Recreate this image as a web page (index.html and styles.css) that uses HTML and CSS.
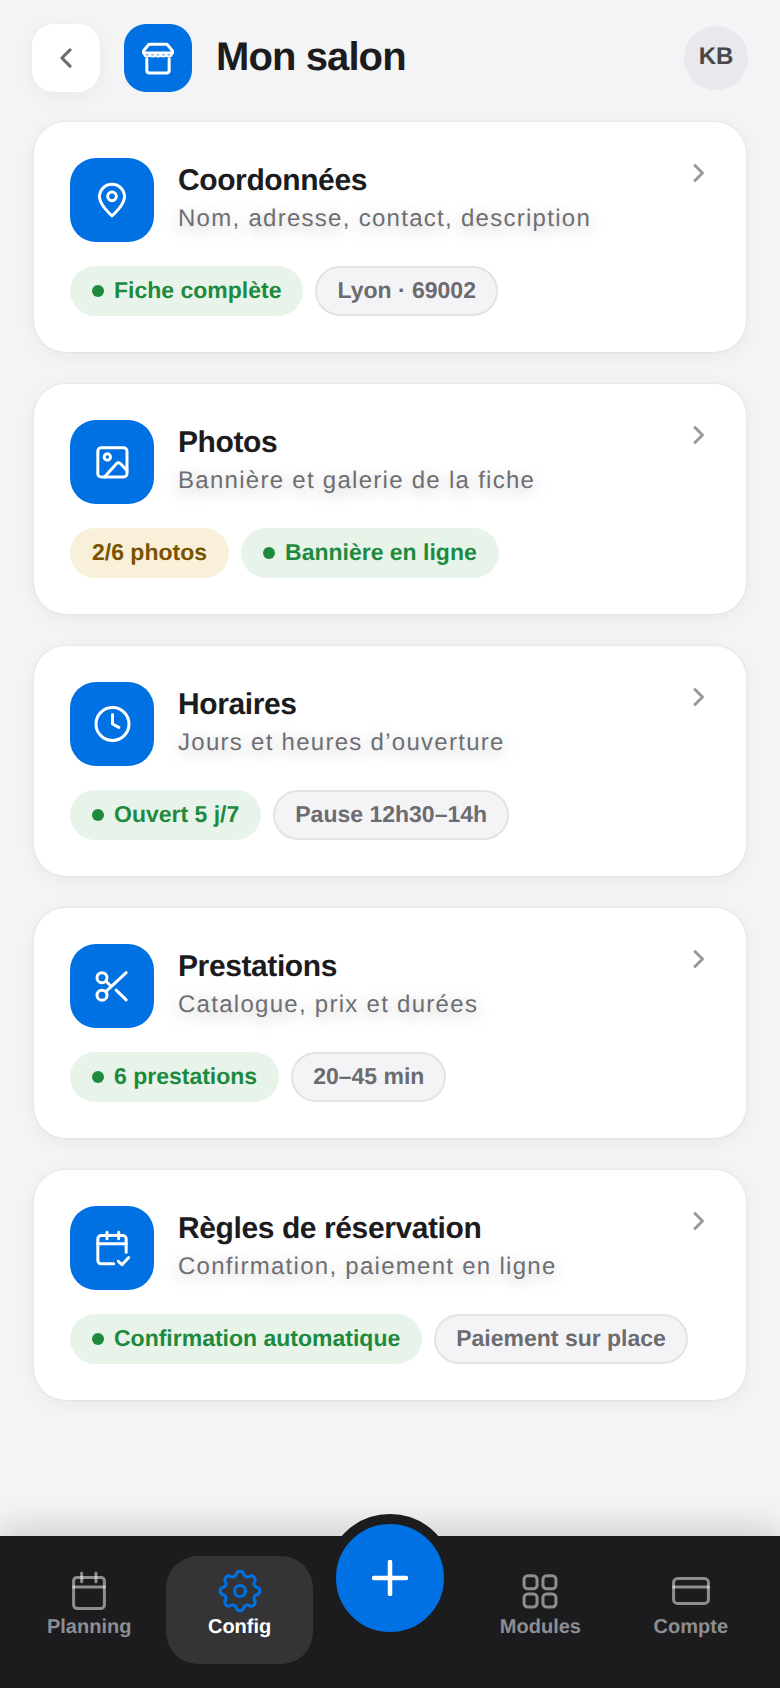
FILE: index.html
```html
<!DOCTYPE html>
<html lang="fr">
<head>
<meta charset="utf-8">
<title>Mon salon</title>
<link rel="stylesheet" href="styles.css">
</head>
<body>
<div class="app">
  <header class="topbar">
    <button class="back" aria-label="Retour">
      <svg class="back-icon" viewBox="0 0 24 24"><path d="M15.500 5l-7 7 7 7"/></svg>
    </button>
    <div class="tile tile-sm">
      <svg class="ic" viewBox="0 0 24 24"><path d="M7 3.800h10a1 1 0 0 1 .8.4l2.700 3.300a1 1 0 0 1 .2.6V9H3.300v-.9a1 1 0 0 1 .2-.6L6.200 4.200a1 1 0 0 1 .8-.4z"/><path class="scallop" d="M3.800 9.600c0 2 3.300 2 3.300 0 0 2 3.300 2 3.300 0 0 2 3.200 2 3.200 0 0 2 3.300 2 3.300 0 0 2 3.300 2 3.300 0"/><path d="M5.300 12.500V19.500a1.500 1.500 0 0 0 1.500 1.500h10.400a1.500 1.500 0 0 0 1.500-1.500v-7"/></svg>
    </div>
    <h1 class="page-title">Mon salon</h1>
    <div class="avatar"><span>KB</span></div>
  </header>

  <main class="list">
    <article class="card">
      <div class="card-head">
        <div class="tile">
          <svg class="ic" viewBox="0 0 24 24"><path d="M19.500 10c0 5-7.500 11.500-7.500 11.500S4.500 15 4.500 10a7.500 7.500 0 0 1 15 0z"/><circle cx="12" cy="9.800" r="2.600"/></svg>
        </div>
        <div class="card-text">
          <h2 class="card-title">Coordonnées</h2>
          <p class="card-sub">Nom, adresse, contact, description</p>
        </div>
        <svg class="chev" viewBox="0 0 24 24"><path d="M8 4.500l7.500 7.500L8 19.500"/></svg>
      </div>
      <div class="pills">
        <span class="pill pill-green"><i class="dot"></i>Fiche complète</span>
        <span class="pill pill-grey">Lyon · 69002</span>
      </div>
    </article>

    <article class="card">
      <div class="card-head">
        <div class="tile">
          <svg class="ic" viewBox="0 0 24 24"><rect x="3.500" y="3.500" width="17.500" height="17.500" rx="2"/><circle cx="9.200" cy="9" r="1.900"/><path d="M7.500 21l7.300-8.100a1.500 1.500 0 0 1 2.200 0l4 4.100"/></svg>
        </div>
        <div class="card-text">
          <h2 class="card-title">Photos</h2>
          <p class="card-sub">Bannière et galerie de la fiche</p>
        </div>
        <svg class="chev" viewBox="0 0 24 24"><path d="M8 4.500l7.500 7.500L8 19.500"/></svg>
      </div>
      <div class="pills">
        <span class="pill pill-amber">2/6 photos</span>
        <span class="pill pill-green"><i class="dot"></i>Bannière en ligne</span>
      </div>
    </article>

    <article class="card">
      <div class="card-head">
        <div class="tile">
          <svg class="ic" viewBox="0 0 24 24"><circle cx="12.300" cy="12" r="9.900"/><path d="M12.300 6.300V12l3.800 2"/></svg>
        </div>
        <div class="card-text">
          <h2 class="card-title">Horaires</h2>
          <p class="card-sub">Jours et heures d’ouverture</p>
        </div>
        <svg class="chev" viewBox="0 0 24 24"><path d="M8 4.500l7.500 7.500L8 19.500"/></svg>
      </div>
      <div class="pills">
        <span class="pill pill-green"><i class="dot"></i>Ouvert 5 j/7</span>
        <span class="pill pill-grey">Pause 12h30–14h</span>
      </div>
    </article>

    <article class="card">
      <div class="card-head">
        <div class="tile">
          <svg class="ic" viewBox="0 0 24 24"><circle cx="6" cy="7" r="3"/><circle cx="6" cy="17.500" r="3"/><path d="M8.300 15.400L20.500 4"/><path d="M8.300 9.100l3 2.900"/><path d="M14.500 14.500l6 5.800"/></svg>
        </div>
        <div class="card-text">
          <h2 class="card-title">Prestations</h2>
          <p class="card-sub">Catalogue, prix et durées</p>
        </div>
        <svg class="chev" viewBox="0 0 24 24"><path d="M8 4.500l7.500 7.500L8 19.500"/></svg>
      </div>
      <div class="pills">
        <span class="pill pill-green"><i class="dot"></i>6 prestations</span>
        <span class="pill pill-grey">20–45 min</span>
      </div>
    </article>

    <article class="card">
      <div class="card-head">
        <div class="tile">
          <svg class="ic" viewBox="0 0 24 24"><path d="M20.500 14.500V6.500a2 2 0 0 0-2-2h-13a2 2 0 0 0-2 2v13a2 2 0 0 0 2 2H13"/><path d="M9 2.500v4"/><path d="M16 2.500v4"/><path d="M3.500 9.500h17"/><path d="M15.800 20l2.200 2 4-4.300"/></svg>
        </div>
        <div class="card-text">
          <h2 class="card-title">Règles de réservation</h2>
          <p class="card-sub">Confirmation, paiement en ligne</p>
        </div>
        <svg class="chev" viewBox="0 0 24 24"><path d="M8 4.500l7.500 7.500L8 19.500"/></svg>
      </div>
      <div class="pills">
        <span class="pill pill-green"><i class="dot"></i>Confirmation automatique</span>
        <span class="pill pill-grey">Paiement sur place</span>
      </div>
    </article>
  </main>

  <nav class="tabbar">
    <a class="tab">
      <svg class="tab-ic" viewBox="0 0 24 24"><rect x="3.600" y="4.600" width="16.800" height="16.900" rx="1.800"/><path d="M3.600 9.800h16.800"/><path d="M8 2.200V7"/><path d="M15.800 2.200V7"/></svg>
      <span>Planning</span>
    </a>
    <a class="tab tab-active">
      <svg class="tab-ic gear" viewBox="2 2 20 20"><path d="M10.325 4.317c.426-1.756 2.924-1.756 3.350 0a1.724 1.724 0 0 0 2.573 1.066c1.543-.94 3.310.826 2.370 2.370a1.724 1.724 0 0 0 1.065 2.572c1.756.426 1.756 2.924 0 3.350a1.724 1.724 0 0 0-1.066 2.573c.94 1.543-.826 3.310-2.370 2.370a1.724 1.724 0 0 0-2.572 1.065c-.426 1.756-2.924 1.756-3.350 0a1.724 1.724 0 0 0-2.573-1.066c-1.543.94-3.310-.826-2.370-2.370a1.724 1.724 0 0 0-1.065-2.572c-1.756-.426-1.756-2.924 0-3.350a1.724 1.724 0 0 0 1.066-2.573c-.94-1.543.826-3.310 2.370-2.370 1 .608 2.296.07 2.572-1.065z"/><circle cx="12" cy="12" r="2.500"/></svg>
      <span>Config</span>
    </a>
    <div class="tab-gap"></div>
    <a class="tab">
      <svg class="tab-ic" viewBox="0 0 24 24"><rect x="3.300" y="3.700" width="7.100" height="7.100" rx="2"/><rect x="13.600" y="3.700" width="7.100" height="7.100" rx="2"/><rect x="3.300" y="13.600" width="7.100" height="7.100" rx="2"/><rect x="13.600" y="13.600" width="7.100" height="7.100" rx="2"/></svg>
      <span>Modules</span>
    </a>
    <a class="tab">
      <svg class="tab-ic" viewBox="0 0 24 24"><rect x="2.500" y="5.200" width="19" height="13.600" rx="2.200"/><path d="M2.500 9.800h19"/></svg>
      <span>Compte</span>
    </a>
    <button class="fab" aria-label="Ajouter">
      <svg class="fab-ic" viewBox="0 0 36 36"><path d="M18 2v32"/><path d="M2 18h32"/></svg>
    </button>
  </nav>
</div>
</body>
</html>
```
FILE: styles.css
```css
* { box-sizing: border-box; }
html, body { margin: 0; padding: 0; }
body {
  background: #f4f4f6;
  font-family: "Liberation Sans", Arial, sans-serif;
  color: #1c1c1e;
  text-rendering: geometricPrecision;
}
.app {
  width: 780px;
  height: 1688px;
  display: flex;
  flex-direction: column;
  overflow: hidden;
}

/* header */
.topbar {
  display: flex;
  align-items: center;
  gap: 24px;
  padding: 24px 32px 0;
}
.back {
  width: 68px;
  height: 68px;
  border: 0;
  border-radius: 22px;
  background: #fff;
  box-shadow: 0 4px 20px rgba(0, 0, 0, 0.05);
  display: flex;
  align-items: center;
  justify-content: center;
  padding: 0;
}
.back-icon {
  width: 28px;
  height: 28px;
  fill: none;
  stroke: #6b6b70;
  stroke-width: 2.700;
  stroke-linecap: round;
  stroke-linejoin: round;
}
.tile {
  width: 84px;
  height: 84px;
  flex: none;
  border-radius: 26px;
  background: #0071e3;
  display: flex;
  align-items: center;
  justify-content: center;
}
.tile-sm {
  width: 68px;
  height: 68px;
  border-radius: 22px;
}
.ic {
  width: 40px;
  height: 40px;
  fill: none;
  stroke: #fff;
  stroke-width: 1.800;
  stroke-linecap: round;
  stroke-linejoin: round;
}
.scallop {
  stroke-width: 1.300;
}
.page-title {
  flex: 1;
  margin: 0 0 2px;
  font-size: 40px;
  line-height: 48px;
  font-weight: 700;
  letter-spacing: -0.9px;
  color: #1c1c1e;
}
.avatar {
  width: 64px;
  height: 64px;
  border-radius: 50%;
  background: #e8e8ed;
  display: flex;
  align-items: center;
  justify-content: center;
  padding-bottom: 2px;
  font-size: 24px;
  font-weight: 700;
  color: #48484a;
}

/* cards */
.list {
  flex: 1;
  display: flex;
  flex-direction: column;
  gap: 32px;
  padding: 30px 34px 0;
}
.card {
  height: 230px;
  padding: 36px;
  background: #fff;
  border-radius: 32px;
  box-shadow: 0 4px 20px rgba(0, 0, 0, 0.05), 0 0 3px rgba(0, 0, 0, 0.08);
}
.card-head {
  display: flex;
  align-items: flex-start;
  gap: 24px;
}
.card-text {
  flex: 1;
  padding-top: 3px;
}
.card-title {
  margin: 0;
  font-size: 30px;
  line-height: 40px;
  font-weight: 700;
  letter-spacing: -0.4px;
  color: #1c1c1e;
}
.card-sub {
  margin: 1px 0 0;
  font-size: 24px;
  line-height: 34px;
  letter-spacing: 1.280px;
  color: #6e6e73;
  text-shadow: 0 4px 16px rgba(0, 0, 0, 0.25);
}
.chev {
  flex: none;
  width: 24px;
  height: 24px;
  margin: 3px -1px 0 0;
  fill: none;
  stroke: #98989d;
  stroke-width: 3;
  stroke-linecap: round;
  stroke-linejoin: round;
}
.pills {
  display: flex;
  gap: 12px;
  margin-top: 24px;
}
.pill {
  display: inline-flex;
  align-items: center;
  gap: 10px;
  height: 50px;
  padding: 0 22px 2px;
  border-radius: 25px;
  font-size: 23px;
  font-weight: 700;
  white-space: nowrap;
}
.pill-green { background: #e8f4ea; color: #1e8a3e; }
.pill-amber { background: #f8f0d9; color: #7a5200; }
.pill-grey {
  background: #f4f4f6;
  border: 2px solid #e3e3e6;
  padding: 0 20px 2px;
  color: #6b6b70;
}
.dot {
  width: 12px;
  height: 12px;
  margin-top: 2px;
  border-radius: 50%;
  background: #1e8a3e;
}

/* tab bar */
.tabbar {
  position: relative;
  display: grid;
  grid-template-columns: repeat(5, 1fr);
  gap: 4px;
  height: 152px;
  flex: none;
  padding: 20px 16px 24px;
  background: #1c1c1e;
  box-shadow: 0 -8px 32px rgba(0, 0, 0, 0.16);
}
.tab {
  display: flex;
  flex-direction: column;
  align-items: center;
  padding-top: 13px;
  border-radius: 32px;
  font-size: 20px;
  line-height: 24px;
  font-weight: 700;
  color: #8e8e93;
}
.tab-active {
  background: #343436;
  color: #fff;
}
.tab-ic {
  width: 44px;
  height: 44px;
  margin-bottom: 2px;
  fill: none;
  stroke: rgba(255, 255, 255, 0.5);
  stroke-width: 1.650;
  stroke-linecap: round;
  stroke-linejoin: round;
}
.gear {
  stroke: #0071e3;
  stroke-width: 1.400;
}
.fab {
  position: absolute;
  left: 326px;
  top: -22px;
  width: 128px;
  height: 128px;
  padding: 0;
  border: 10px solid #1c1c1e;
  border-radius: 50%;
  background: #0071e3;
  display: flex;
  align-items: center;
  justify-content: center;
}
.fab-ic {
  width: 36px;
  height: 36px;
  fill: none;
  stroke: #fff;
  stroke-width: 4.500;
  stroke-linecap: round;
}
```
